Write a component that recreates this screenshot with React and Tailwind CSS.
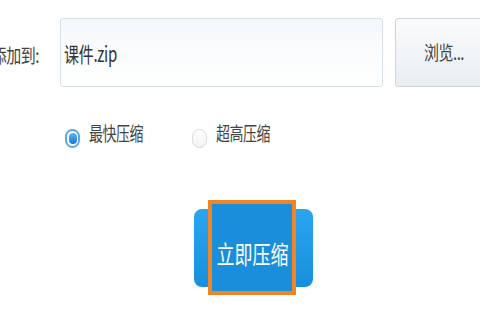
import React from 'react'

const font = { fontFamily: '"Noto Sans CJK SC", "Noto Sans", sans-serif' }

function Radio({ checked, label }) {
	return (
		<label className="flex items-center gap-[9px] cursor-pointer">
			{checked ? (
				<span className="w-[15px] h-[19px] rounded-full border-2 border-[#5aa9e4] bg-white flex items-center justify-center">
					<span className="w-[8px] h-[11px] rounded-full bg-gradient-to-b from-[#5fb6f2] to-[#1577cf]" />
				</span>
			) : (
				<span className="w-[15px] h-[19px] rounded-full border border-[#d6d9dc] bg-gradient-to-b from-white to-[#f1f2f4]" />
			)}
			<span className="text-[14px] text-[#444] scale-y-[1.35] tracking-[-0.5px] leading-none -translate-y-[6px]">{label}</span>
		</label>
	)
}

export default function App() {
	return (
		<div className="w-[480px] h-[320px] bg-white overflow-hidden" style={font}>
			{/* file row */}
			<div className="flex items-center mt-[18px]">
				<div className="w-[60px] flex justify-end pr-[21px] whitespace-nowrap">
					<span className="text-[15px] text-[#444] scale-y-[1.3] tracking-[-0.5px] translate-y-[3px]">添加到:</span>
				</div>
				<div className="w-[323px] h-[69px] shrink-0 border border-[#d6dee6] rounded-[3px] bg-gradient-to-b from-[#f5f8fb] to-white flex items-center pl-[3px]">
					<span className="text-[15px] text-[#333] scale-y-[1.4] tracking-[-0.3px] origin-left translate-y-[2px]">课件.zip</span>
				</div>
				<button className="ml-[12px] w-[120px] h-[69px] shrink-0 border border-[#cdd4dc] rounded-[3px] bg-gradient-to-b from-[#fafbfd] to-[#e9eef3] flex items-center justify-start pl-[28px]">
					<span className="text-[15px] text-[#444] scale-y-[1.3] tracking-[-0.5px]">浏览...</span>
				</button>
			</div>

			{/* mode row */}
			<div className="flex items-center mt-[42px] pl-[65px] gap-[49px]">
				<Radio checked label="最快压缩" />
				<Radio label="超高压缩" />
			</div>

			{/* action */}
			<div className="mt-[61px] pl-[194px]">
				<button className="relative w-[119px] h-[78px] rounded-[8px] bg-gradient-to-b from-[#2aa5ee] to-[#1690de] flex items-center justify-center">
					{/* highlight box */}
					<span className="absolute left-[14px] top-[-9px] w-[88px] h-[95px] border-[4px] border-[#f08528] bg-[#1a8ddb]" />
					<span className="relative text-[18px] text-white scale-y-[1.4] -translate-x-[1px] translate-y-[5px]">立即压缩</span>
				</button>
			</div>
		</div>
	)
}
